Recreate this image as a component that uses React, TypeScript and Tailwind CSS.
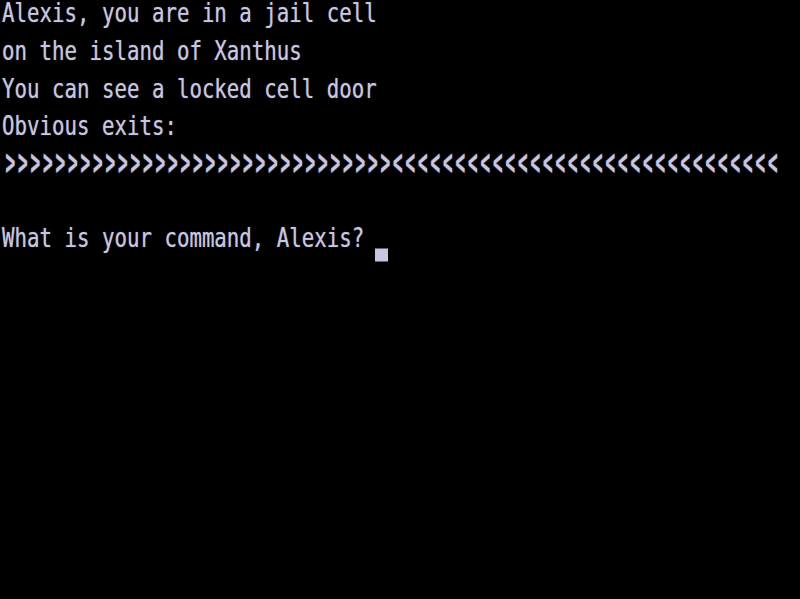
import React from "react";

const R = Array.from({ length: 31 }, (_, i) => i);

export default function App() {
  return (
    <div className="w-[800px] h-[599px] bg-black overflow-hidden">
      <div className="origin-top-left scale-y-[1.3] mt-[-5px] pl-[2px] font-['DejaVu_Sans_Mono',monospace] text-[20.762px] leading-[28.85px] text-[#c8c6e0] whitespace-pre [text-shadow:0_0_1px_rgba(200,198,224,0.6)]">
        <div>Alexis, you are in a jail cell</div>
        <div>on the island of Xanthus</div>
        <div>You can see a locked cell door</div>
        <div>Obvious exits:</div>
        <div className="flex h-[28.85px] items-center pl-[2px]">
          {R.map((i) => (
            <span key={"r" + i} className="inline-block w-[12.5px] text-center font-bold text-[16px] leading-none scale-y-[1.75]">&gt;</span>
          ))}
          {R.map((i) => (
            <span key={"l" + i} className="inline-block w-[12.5px] text-center font-bold text-[16px] leading-none scale-y-[1.75]">&lt;</span>
          ))}
        </div>
        <div>&nbsp;</div>
        <div>
          What is your command, Alexis?{" "}
          <span className="inline-block w-[13px] h-[10px] ml-[-2px] bg-[#c8c6e0] align-[-11px]"></span>
        </div>
      </div>
    </div>
  );
}
